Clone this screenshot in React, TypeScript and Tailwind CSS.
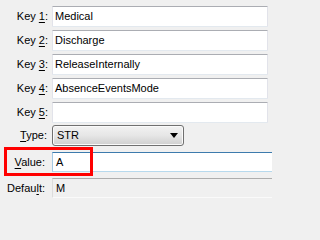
import React from "react";

const keys = [
  { n: "1", value: "Medical" },
  { n: "2", value: "Discharge" },
  { n: "3", value: "ReleaseInternally" },
  { n: "4", value: "AbsenceEventsMode" },
  { n: "5", value: "" },
];

function Label({ children, pr }: { children: React.ReactNode; pr: string }) {
  return (
    <div className={`w-[52px] shrink-0 text-right text-black ${pr}`}>
      {children}
    </div>
  );
}

export default function App() {
  return (
    <div className="min-h-screen w-full bg-[#f0f0f0]">
      <div
        className="relative w-[272px] h-[203px] overflow-hidden bg-[#f0f0f0] text-[11px] leading-none text-black"
        style={{ fontFamily: '"Liberation Sans", Arial, sans-serif' }}
      >
        <div className="flex flex-col pt-[6px]">
          {/* Key rows */}
          <div className="flex flex-col gap-[3px]">
            {keys.map((k) => (
              <div key={k.n} className="flex items-center h-[21px]">
                <Label pr="pr-[4px]">
                  Key <span className="underline underline-offset-2">{k.n}</span>:
                </Label>
                <div className="h-full w-[216px] flex items-center pl-[2px] bg-white border border-t-[#abadb3] border-x-[#e2e3ea] border-b-[#e3e9ef] rounded-[1px]">
                  {k.value}
                </div>
              </div>
            ))}
          </div>

          {/* Type combo */}
          <div className="flex items-center h-[21px] mt-[2px]">
            <Label pr="pr-[5px]">
              <span className="underline underline-offset-2">T</span>ype:
            </Label>
            <div className="h-full w-[132px] flex items-center justify-between pl-[4px] pr-[5px] border border-[#707070] rounded-[3px] bg-gradient-to-b from-[#f2f2f2] via-[#e6e6e6] to-[#cfcfcf] shadow-[inset_0_0_0_1px_#fafafa]">
              <span>STR</span>
              <svg width="8" height="5" viewBox="0 0 8 5">
                <path d="M0 0H8L4 5Z" fill="#000" />
              </svg>
            </div>
          </div>

          {/* Value */}
          <div className="flex items-center h-[20px] mt-[6px]">
            <Label pr="pr-[7px]">
              <span className="underline underline-offset-2">V</span>alue:
            </Label>
            <div className="h-full flex-1 -mr-[4px] flex items-center pl-[3px] bg-white border border-t-[#3d7bad] border-x-[#a4c9e3] border-b-[#b7d9ed]">
              A
            </div>
          </div>

          {/* Default */}
          <div className="flex items-center h-[20px] mt-[6px]">
            <Label pr="pr-[7px]">
              Defau<span className="underline underline-offset-2">l</span>t:
            </Label>
            <div className="h-full flex-1 -mr-[4px] flex items-center pl-[3px] bg-[#f0f0f0] border border-t-[#adadad] border-x-[#dcdcdc] border-b-[#fafafa]">
              M
            </div>
          </div>
        </div>

        {/* red annotation box */}
        <div className="absolute left-[4px] top-[147px] w-[89px] h-[29px] border-[3px] border-[#ff0000] pointer-events-none" />
      </div>
    </div>
  );
}
